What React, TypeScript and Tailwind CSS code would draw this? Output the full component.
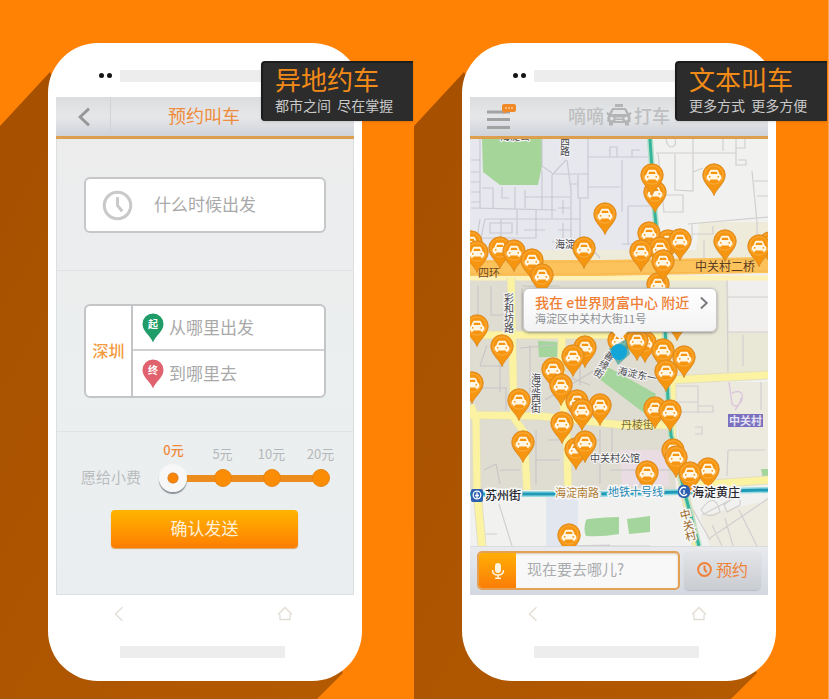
import { useState, type ReactNode } from "react";

const carPath =
  "M-5.2 0.2 L-3.6 -3.4 Q-3.3 -4.2 -2.4 -4.2 H2.4 Q3.3 -4.2 3.6 -3.4 L5.2 0.2 Q6.6 0.8 6.6 2 V4.4 H5.4 V5.6 H3.4 V4.4 H-3.4 V5.6 H-5.4 V4.4 H-6.6 V2 Q-6.6 0.8 -5.2 0.2 Z M-3.2 -0.4 H3.2 L2.5 -2.4 H-2.5 Z M-3.8 2.9 A0.8 0.8 0 1 0 -3.8 1.3 A0.8 0.8 0 0 0 -3.8 2.9 Z M3.8 2.9 A0.8 0.8 0 1 0 3.8 1.3 A0.8 0.8 0 0 0 3.8 2.9 Z";

function ChevronLeft({ className }: { className: string }) {
  return (
    <svg viewBox="0 0 12 18" className={className} fill="none" stroke="currentColor">
      <path d="M10.5 1.5 L2.5 9 L10.5 16.5" />
    </svg>
  );
}

function Clock({ className, width }: { className: string; width: number }) {
  return (
    <svg viewBox="0 0 30 30" className={className} fill="none" stroke="currentColor" strokeWidth={width}>
      <circle cx="15" cy="15" r="12.8" />
      <path d="M15 7 V15 L19.5 20.5" />
    </svg>
  );
}

function Phone({ title, note, children }: { title: string; note: string; children: ReactNode }) {
  return (
    <section className="relative min-w-0 flex-1 overflow-hidden bg-[#ff8204] pb-[18px] pt-[43px]">
      <svg className="absolute left-0 top-0 h-[699px] w-[414px]" viewBox="0 0 414 699" aria-hidden="true">
        <defs>
          <linearGradient id="shade" x1="0" y1="0" x2="1" y2="1">
            <stop offset="0" stopColor="#a65000" />
            <stop offset="1" stopColor="#b45a00" />
          </linearGradient>
        </defs>
        <path d="M0 126 L50 72 L60 90 L343 673 L317 699 H0 Z" fill="url(#shade)" />
      </svg>
      <div className="relative ml-12 mr-[52px] rounded-[50px] bg-white px-2">
        <div className="flex h-[54px] items-center pl-[43px] pt-[11px]">
          <span className="size-[5px] rounded-full bg-[#151515]" />
          <span className="ml-[3px] size-[5px] rounded-full bg-[#151515]" />
          <span className="ml-2 h-3 w-[165px] bg-[#ededed]" />
        </div>
        {children}
        <div className="flex h-[51px] items-start justify-between pl-[57px] pr-[61px] pt-[11px] text-[#e2ddd4]">
          <button aria-label="返回" className="block">
            <ChevronLeft className="h-4 w-[11px] stroke-[1.5]" />
          </button>
          <button aria-label="主页" className="block">
            <svg viewBox="0 0 16 16" className="size-4" fill="none" stroke="currentColor" strokeWidth="1.3">
              <path d="M8 1.5 L14.5 8 L13 9 V13.5 H3 V9 L1.5 8 Z" />
            </svg>
          </button>
        </div>
        <div className="h-[35px] pl-16">
          <div className="h-3 w-[165px] bg-[#ededed]" />
        </div>
      </div>
      <div className="absolute right-px top-[61px] h-[60px] w-[152px] rounded-l border-l-2 border-t-2 border-[#1c1c1c] bg-[#2c2c2c] pl-[12px] shadow-sm">
        <h2 className="text-[26px] leading-8 text-[#f28a17]">{title}</h2>
        <p className="whitespace-pre text-[14px] leading-[20px] text-[#c9c9c9]">{note}</p>
      </div>
    </section>
  );
}

const headerStyle =
  "flex h-[42px] items-center border-b-[3px] border-[#dd9f4d] bg-linear-to-b from-[#dcdddf] via-[#e6e7e9] to-[#cfd3d9]";

function PlacePin({ text, color }: { text: string; color: string }) {
  return (
    <svg viewBox="0 0 22 30" className="h-[30px] w-[22px] shrink-0" aria-hidden="true">
      <path d="M11 29.5 C9 23 0.5 18.5 0.5 11 A10.5 10.5 0 0 1 21.5 11 C21.5 18.5 13 23 11 29.5 Z" fill={color} />
      <text x="11" y="15" fontSize="10" fontWeight="700" fill="#fff" textAnchor="middle">
        {text}
      </text>
    </svg>
  );
}

const tips = ["0元", "5元", "10元", "20元"];

function BookingScreen() {
  const [tip, setTip] = useState(0);
  const field = "min-w-0 flex-1 bg-transparent pb-[2px] text-[17px] text-[#777] outline-none placeholder:text-[#a9a9a9]";
  return (
    <div>
      <header className={headerStyle}>
        <button aria-label="返回" className="flex h-full w-[55px] items-center justify-center border-r border-[#d2d3d6] pl-[2px] text-[#989898]">
          <ChevronLeft className="h-[20px] w-[14px] stroke-[2.6]" />
        </button>
        <h1 className="flex-1 pb-[3px] pr-[57px] text-center text-[18px] leading-6 text-[#ee8c3c]">预约叫车</h1>
      </header>
      <form
        className="border border-t-0 border-[#dcdfe0] bg-linear-to-b from-[#ececed] via-[#ecefef] to-[#eaeef0]"
        onSubmit={(e) => e.preventDefault()}
      >
        <div className="h-[132px] border-b border-[#e0e2e3] px-[27px] pt-[38px]">
          <label className="flex h-14 items-center rounded-md border-2 border-[#c6c7c8] bg-white pl-4">
            <Clock className="size-[31px] text-[#c9c9c9]" width={3} />
            <input aria-label="出发时间" placeholder="什么时候出发" className={"ml-[21px] " + field} />
          </label>
        </div>
        <div className="h-[161px] border-b border-[#e0e2e3] px-[27px] pt-[33px]">
          <div className="flex h-[94px] rounded-md border-2 border-[#c4c5c7] bg-white">
            <button type="button" className="w-[47px] border-r-2 border-[#c4c5c7] pb-[2px] text-[16px] font-medium text-[#f39a3f]">
              深圳
            </button>
            <div className="flex min-w-0 flex-1 flex-col">
              <label className="flex h-[45px] items-center gap-[5px] border-b-2 border-[#d0d1d3] pl-[9px]">
                <PlacePin text="起" color="#1f9c68" />
                <input aria-label="出发地" placeholder="从哪里出发" className={field} />
              </label>
              <label className="flex h-[45px] items-center gap-[5px] pl-[9px]">
                <PlacePin text="终" color="#e0626e" />
                <input aria-label="目的地" placeholder="到哪里去" className={field} />
              </label>
            </div>
          </div>
        </div>
        <div className="h-[162px] pt-2">
          <div className="flex">
            <label htmlFor="tip" className="ml-6 mt-[26px] w-[68px] text-[15px] leading-[22px] text-[#b9bcbe]">
              愿给小费
            </label>
            <div className="grid w-[196px] grid-cols-4 text-center text-[13px] leading-5">
              {tips.map((t, i) => (
                <span key={t} className={i === tip ? "h-6 font-medium text-[#f0893c]" : "h-6 pt-1 text-[#b5b8ba]"}>
                  {t}
                </span>
              ))}
              <div className="relative col-span-4 grid h-7 grid-cols-4 items-center justify-items-center">
                <span className="absolute inset-x-[24px] top-[11px] h-[7px] bg-[#ec8c1c]" />
                {tips.map((t) => (
                  <span key={t} className="relative size-[18px] rounded-full border border-[#e98512] bg-[#fb8c05]" />
                ))}
                <input
                  id="tip"
                  type="range"
                  min={0}
                  max={3}
                  value={tip}
                  onChange={(e) => setTip(Number(e.target.value))}
                  className="absolute inset-x-[10px] top-0 h-7 appearance-none bg-transparent [&::-webkit-slider-thumb]:size-7 [&::-webkit-slider-thumb]:appearance-none [&::-webkit-slider-thumb]:rounded-full [&::-webkit-slider-thumb]:bg-[radial-gradient(circle,#f98406_0_4px,#d9822a_5px,#f7f7f7_6px)] [&::-webkit-slider-thumb]:shadow-[0_2px_1px_#8a9299]"
                />
              </div>
            </div>
          </div>
          <button className="ml-[54px] mt-[18px] block h-[38px] w-[187px] rounded-[4px] bg-linear-to-b from-[#ffb400] to-[#fd7d02] pb-[2px] text-[17px] text-[#fff0d8] shadow-[0_1px_1px_#dba25f]">
            确认发送
          </button>
        </div>
      </form>
    </div>
  );
}

/* Taxi markers: centre x and top y in map units, back to front */
const taxis = [
  [471, 230], [477, 240], [500, 236], [514, 239], [532, 248], [542, 263],
  [655, 180], [652, 163], [714, 163], [605, 202], [584, 236],
  [658, 272], [668, 229], [649, 221], [660, 236], [641, 239], [680, 228], [663, 249],
  [770, 231], [725, 229], [759, 234],
  [677, 308], [477, 314], [502, 334], [472, 371], [519, 388],
  [585, 335], [573, 344], [553, 357], [561, 373], [577, 389], [600, 393], [582, 398],
  [562, 411], [523, 430], [576, 437], [585, 430], [569, 523],
  [619, 328], [645, 330], [637, 328], [663, 338], [684, 345], [666, 359],
  [655, 396], [670, 399], [673, 438], [676, 445], [647, 460], [708, 457], [690, 461],
];

function Taxi({ x, y }: { x: number; y: number }) {
  return (
    <g transform={`translate(${x} ${y + 12})`}>
      <path
        d="M0 20.5 C-2 14 -11.2 8.5 -11.2 0 A11.2 11.2 0 0 1 11.2 0 C11.2 8.5 2 14 0 20.5 Z"
        fill="#f6950f"
        stroke="#d98a25"
        strokeWidth="0.9"
      />
      <circle r="9.2" fill="none" stroke="#fbb24d" strokeWidth="0.8" />
      <path d={carPath} fill="#fff6e4" fillRule="evenodd" transform="translate(0 -0.5) scale(1.12)" />
    </g>
  );
}

/* Street name written from top to bottom, centred on x */
function Vertical({ x, y, text, turn = 0 }: { x: number; y: number; text: string; turn?: number }) {
  return (
    <text x={x} y={y} className="[writing-mode:vertical-rl]" transform={`rotate(${turn} ${x} ${y})`}>
      {text}
    </text>
  );
}

function CityMap() {
  return (
    <svg viewBox="470 139 298 407" preserveAspectRatio="xMidYMid slice" className="block h-[407px] w-full" role="img" aria-label="地图">
      <path d="M470 139 H769 V546 H470 Z" fill="#f1f1ef" />
      <path d="M470 139 H652 L658 262 H470 Z" fill="#e7e8ee" />
      <path d="M540 250 H769 V262 H540 Z M700 222 H769 V262 H694 Z" fill="#eeebda" />
      <path d="M470 276 H660 L670 380 L676 490 H470 Z" fill="#dfdcd1" />
      <path d="M660 276 H769 V376 H670 Z" fill="#e9e7d6" />
      <path d="M728 276 H769 V332 H729 Z" fill="#f1efed" />
      <path d="M674 382 H769 V484 H682 Z" fill="#ece9df" />
      <path d="M546 496 H578 V546 H546 Z" fill="#e2e6ef" />
      <path d="M620 450 H665 L670 486 H622 Z" fill="#e9dce2" />
      <path d="M700 516 L769 500 V546 H710 Z" fill="#edebdf" />
      <path d="M482 139 H542 V166 L538 185 H500 L483 172 Z" fill="#a6d59a" />
      <path
        d="M586 520 Q588 518 619 517 L619 534 Q602 537 586 536 Q583 530 586 520 Z M627 519 L650 516 V532 L629 534 Z M538 341 L558 342 V357 H539 Z M598 378 L606 366 L656 394 L648 416 Z M761 469 H769 V480 H763 Z"
        fill="#a3d59c"
      />
      {/* minor streets and building outlines */}
      <path
        fill="none"
        stroke="#c9cad2"
        strokeWidth="1.2"
        d="M471 160 H480 M471 172 H480 M471 182 H480 M471 192 H480 M471 202 H480 M480 139 V208 M471 208 L556 210 M482 188 H493 V208 M502 187 V198 H509 M515 187 V209 M525 190 V208 M542 170 V209 M525 197 H570 M542 139 V166 L552 173 M566 160 L552 175 V218 M552 174 H588 V139 M567 160 L571 190 V245 M578 175 V198 H588 V174 M571 184 H577 M580 198 V242 M485 219 H580 M485 219 L481 238 H536 V209 M490 223 H512 V233 H490 Z M501 219 V240 M517 210 V235 M524 230 H545 M558 208 H570 M563 200 V214 M558 230 H572 M563 223 V238 M588 187 H620 M588 157 H630 M610 157 V147 H617 V157 M622 160 V212 M471 248 L477 238 L480 219 M580 242 H552 M600 258 L592 249 M628 206 H650 M628 206 V245 M622 244 H640 M622 157 H650 M632 157 V150 H640"
      />
      <path
        fill="none"
        stroke="#d2cfd0"
        strokeWidth="1.2"
        d="M656 153 H736 M675 154 V190 L693 191 V139 M693 172 L703 168 M723 139 V151 M736 139 V166 M666 139 Q667 147 672 147 Q677 145 675 139 M736 148 H745 V139 M736 165 H746 V160 H738 M658 153 L664 212 H683 V195 H665 M752 171 L757 222 M754 181 H769 M757 196 H769 M688 224 L769 217 M692 224 V240 M692 234 H713 V226 M704 240 V260 M757 222 V240 M727 278 L728 376 M728 297 H769 M728 332 H769 M743 335 V366 M676 386 H698 V413 M676 402 H698 M698 406 H713 V412 H676 M761 382 V410 M695 427 H702 V434 H695 M682 490 L710 540 M702 515 L738 496 M710 538 L769 498 M701 510 Q715 490 720 512 Q708 520 701 510 M724 505 Q742 490 740 505 L727 512 Z M712 525 L722 546 M725 518 L733 546 M739 510 L757 546 M728 450 H765 M728 450 L727 476 M650 546 H560 L610 545 M499 504 L512 546 M484 534 H497"
      />
      <path
        fill="none"
        stroke="#dcc6dc"
        strokeWidth="1.4"
        d="M729 382 L732 404 Q739 410 741 398 M732 393 Q744 388 742 400 L735 410"
      />
      <path
        fill="none"
        stroke="#c8c5c5"
        strokeWidth="1.1"
        d="M478 286 V330 M491 286 V315 H506 M522 288 V330 M522 286 H560 M535 286 V310 L523 318 M487 345 L480 366 M480 366 H504 M500 345 V392 M520 348 L555 345 M530 345 V400 M478 388 H506 V410 M545 400 L595 370 M536 430 V484 M548 440 H600 M484 470 L496 464 L500 484 M500 470 H520 M535 460 H560 M600 430 V484 M610 470 H670 M640 465 V486 M612 428 V455 M580 346 V385 M571 378 L590 385"
      />
      {/* major roads */}
      <g fill="none" strokeLinejoin="round">
        <path d="M470 278 H769" stroke="#fff2b8" strokeWidth="5" />
        <path d="M470 268 H600 L769 265" stroke="#fcc35d" strokeWidth="16" />
        <path d="M470 262 H600 L769 259 M470 274 H600 L769 271" stroke="#f6b64c" strokeWidth="1" />
        <g stroke="#e3dfc0" strokeWidth="9">
          <path d="M511 278 L514 418 L524 432 L527 490 M470 335 H662 M562 336 L561 382 L567 440 L568 490 M470 415 L540 416 L622 425 H672" />
          <path d="M471 405 L476 420 L477 490 L482 546 M668 380 L769 375 M672 380 V435 L684 490 L697 546 M682 486 L769 480" />
        </g>
        <g stroke="#fbf3a2" strokeWidth="7">
          <path d="M511 278 L514 418 L524 432 L527 490 M470 335 H662 M562 336 L561 382 L567 440 L568 490 M470 415 L540 416 L622 425 H672" />
          <path d="M471 405 L476 420 L477 490 L482 546 M668 380 L769 375 M672 380 V435 L684 490 L697 546 M682 486 L769 480" />
        </g>
        <path d="M650 139 L655 215 L664 300 L668 400 L671 435 L684 490 L699 546" stroke="#b5e0c8" strokeWidth="6" />
        <path d="M650 139 L655 215 L664 300 L668 400 L671 435 L684 490 L699 546" stroke="#36b49c" strokeWidth="3" />
        <path d="M470 494 H600 L769 490" stroke="#9adbe0" strokeWidth="6" />
        <path d="M470 494 H600 L769 490" stroke="#1f9ab8" strokeWidth="3" />
      </g>
      {/* street names */}
      <g fill="#4a4a50" fontSize="10" stroke="#f5f5f5" strokeWidth="2" paintOrder="stroke">
        <text x="500" y="140">海淀公</text>
        <Vertical x={565} y={136} text="西路" />
        <text x="555" y="248">海淀</text>
        <Vertical x={509} y={293} text="彩和坊路" />
        <Vertical x={536} y={373} text="海淀西街" />
        <text x="590" y="462">中关村公馆</text>
        <Vertical x={612} y={352} text="善缘街" turn={32} />
        <text x="617" y="374" transform="rotate(12 617 374)">海淀东一</text>
      </g>
      <text x="478" y="277" fontSize="11" fill="#6e4a20">四环</text>
      <text x="695" y="271" fontSize="12" fill="#5a3c20">中关村二桥</text>
      <text x="621" y="429" fontSize="11" fill="#7b6c31">丹棱街</text>
      {taxis.map(([x, y], i) => (
        <Taxi key={i} x={x} y={y} />
      ))}
      <path d="M609 349 L626 339 L630 354 L618 365 Z" fill="#3d9f9b" opacity="0.7" />
      <circle cx="619" cy="352" r="8" fill="#13a5d8" />
      <g fontSize="12" stroke="#f7f7f7" strokeWidth="3" paintOrder="stroke">
        <text x="485" y="500" fill="#26282e" fontWeight="500">苏州街</text>
        <text x="692" y="497" fill="#26282e" fontWeight="500">海淀黄庄</text>
        <text x="555" y="497" fontSize="11" fill="#b07a2c">海淀南路</text>
        <text x="608" y="496" fontSize="11" fill="#2789b5">地铁十号线</text>
        <g fontSize="11" fill="#9a6826">
          <Vertical x={684} y={509} text="中关村" turn={-14} />
        </g>
      </g>
      <g fill="#2c5fae">
        <rect x="471" y="489" width="12" height="13" rx="2" />
        <rect x="678" y="485" width="12" height="13" rx="5" />
      </g>
      <g fill="none" stroke="#fff" strokeWidth="1.3">
        <circle cx="477" cy="495" r="3.8" />
        <path d="M477 492.5 V498 M475 495.5 H479 M686 488 A4 4 0 1 0 687 494 M684 490 V494" />
      </g>
      <rect x="728" y="414" width="35" height="13" fill="#7a70bd" />
      <text x="729" y="425" fontSize="11" fontWeight="700" fill="#e6e2f6">中关村</text>
    </svg>
  );
}

function MapScreen() {
  return (
    <div>
      <header className={headerStyle}>
        <button aria-label="菜单" className="ml-4 block pb-1 text-[#a2a2a2]">
          <svg viewBox="0 0 32 30" className="h-[30px] w-8">
            <path d="M1 12 H24 M1 19.5 H24 M1 27.5 H24" stroke="currentColor" strokeWidth="3" fill="none" />
            <path d="M18 4 H28 Q30 4 30 6 V10 Q30 12 28 12 H21 L17 14 L18 12 Q16 12 16 10 V6 Q16 4 18 4 Z" fill="#f08a28" />
            <path d="M19 8 H27" stroke="#f9c48b" strokeWidth="1.4" strokeDasharray="2 1" />
          </svg>
        </button>
        <h1 className="ml-[50px] flex items-center pb-[3px] text-[18px] font-medium leading-6 text-[#bdbfc1]">
          嘀嘀
          <svg viewBox="0 0 26 24" className="mx-[2px] h-6 w-[26px]" aria-hidden="true">
            <path
              fill="#b2b4b6"
              fillRule="evenodd"
              d="M9 1 H17 V4 H9 Z M7 5 H19 Q20 5 20.6 6.2 L22.8 10.2 L25 9 L25.5 11 L23.8 12.4 Q24.6 13.5 24.6 15 V19 H23 V22.5 H19 V20 H7 V22.5 H3 V19 H1.4 V15 Q1.4 13.5 2.2 12.4 L0.5 11 L1 9 L3.2 10.2 L5.4 6.2 Q6 5 7 5 Z M5.5 11 H20.5 L18.4 7 H7.6 Z M5.8 17.4 A1.8 1.8 0 1 0 5.8 13.8 A1.8 1.8 0 0 0 5.8 17.4 Z M20.2 17.4 A1.8 1.8 0 1 0 20.2 13.8 A1.8 1.8 0 0 0 20.2 17.4 Z M9.5 14.5 V15.6 H16.5 V14.5 Z M9.5 17 V18 H16.5 V17 Z"
            />
          </svg>
          打车
        </h1>
      </header>
      <div className="relative">
        <CityMap />
        <button className="absolute left-[53px] top-[149px] flex h-[44px] w-[194px] items-center justify-between rounded-md border border-[#c9c9c9] bg-linear-to-b from-white to-[#f3f3f3] pb-[2px] pl-[11px] pr-[7px] text-left shadow-[0_1px_3px_#55555599]">
          <span className="whitespace-nowrap">
            <span className="block text-[14px] font-medium leading-[18px] text-[#ef7f35]">我在 e世界财富中心 附近</span>
            <span className="block text-[11px] leading-[15px] text-[#8c8f94]">海淀区中关村大街11号</span>
          </span>
          <svg viewBox="0 0 12 18" className="mb-3 h-[14px] w-[10px]" fill="none" stroke="#777b80" strokeWidth="2.5">
            <path d="M2 2 L9.5 9 L2 16" />
          </svg>
          <svg viewBox="0 0 18 9" className="absolute left-[87px] top-[42px] h-[9px] w-[18px]" aria-hidden="true">
            <path d="M1 0 H17 L9 8.5 Z" fill="#f3f3f3" />
          </svg>
        </button>
      </div>
      <form
        className="flex h-[49px] gap-1 border-t border-[#d8dbdf] bg-linear-to-b from-[#e8eaee] to-[#d3d8e0] pb-1 pl-[7px] pr-[7px] pt-[4px]"
        onSubmit={(e) => e.preventDefault()}
      >
        <div className="flex h-[39px] min-w-0 flex-1 overflow-hidden rounded-[5px] border-2 border-[#e3a155] bg-[#f8f8f9] shadow-[inset_0_1px_2px_#d9c7b0]">
          <button type="button" aria-label="语音" className="flex w-[37px] shrink-0 items-center justify-center bg-linear-to-b from-[#ffae05] to-[#fb7d07]">
            <svg viewBox="0 0 14 18" className="h-[18px] w-[14px]">
              <rect x="4" y="1" width="6" height="10" rx="3" fill="#fff3dd" />
              <path d="M1.5 8 Q1.5 13 7 13 Q12.5 13 12.5 8 M7 13 V16 M4 16.3 H10" stroke="#fff3dd" strokeWidth="1.5" fill="none" />
            </svg>
          </button>
          <input
            aria-label="目的地"
            placeholder="现在要去哪儿?"
            className="min-w-0 flex-1 pb-[2px] pl-[11px] text-[15px] text-[#777] outline-none placeholder:text-[#aaabad]"
          />
        </div>
        <button className="flex h-[39px] w-[77px] items-center justify-center gap-1 rounded-[5px] bg-linear-to-b from-[#e4e5e8] to-[#c9ccd1] pb-[3px] text-[16px] text-[#f08238] shadow-[0_1px_1px_#b9bdc4]">
          <Clock className="size-[15px]" width={4} />
          预约
        </button>
      </form>
    </div>
  );
}

export default function App() {
  return (
    <main className="flex min-h-screen overflow-hidden bg-[#ffa54a] pr-px font-['Noto_Sans_CJK_SC',sans-serif]">
      <Phone title="异地约车" note="都市之间  尽在掌握">
        <BookingScreen />
      </Phone>
      <Phone title="文本叫车" note="更多方式  更多方便">
        <MapScreen />
      </Phone>
    </main>
  );
}
